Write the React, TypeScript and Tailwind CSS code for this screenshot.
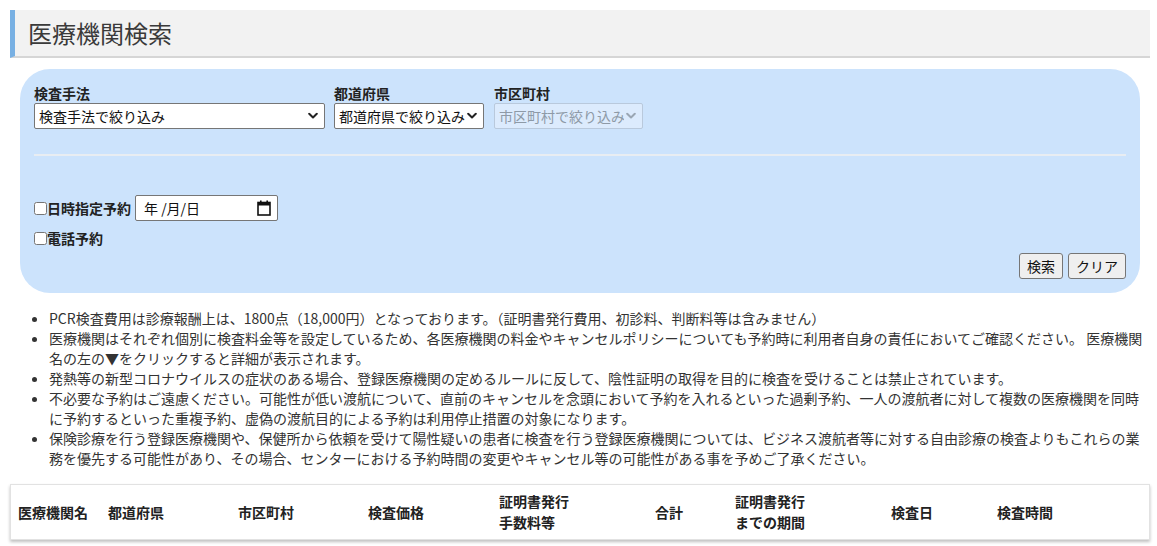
import React from "react";

const font = { fontFamily: '"Noto Sans CJK JP", "Noto Sans", sans-serif' };

function Chevron({ color = "#222" }: { color?: string }) {
  return (
    <svg width="10" height="7" viewBox="0 0 10 7" className="pointer-events-none absolute right-[7px] top-1/2 -translate-y-1/2">
      <path d="M1.2 1.2 L5 5 L8.8 1.2" fill="none" stroke={color} strokeWidth="2" strokeLinecap="round" strokeLinejoin="round" />
    </svg>
  );
}

function Sel({ width, text, disabled }: { width: string; text: string; disabled?: boolean }) {
  return (
    <div className={`relative ${width}`}>
      <select
        disabled={disabled}
        className={
          disabled
            ? "block h-[26px] w-full appearance-none rounded-[2px] border border-[#b9c9dc] bg-[#dcebfd] pl-[4px] pr-[18px] text-[14px] text-[#8e9aa7] outline-none"
            : "block h-[26px] w-full appearance-none rounded-[2px] border border-[#767676] bg-white pl-[4px] pr-[18px] text-[14px] text-[#111] outline-none"
        }
        style={font}
      >
        <option>{text}</option>
      </select>
      <Chevron color={disabled ? "#9aa6b3" : "#222"} />
    </div>
  );
}

function CalendarIcon() {
  return (
    <svg width="14" height="16" viewBox="0 0 14 16">
      <rect x="1" y="2.5" width="12" height="12.5" fill="none" stroke="#111" strokeWidth="1.6" />
      <rect x="1" y="2.5" width="12" height="3" fill="#111" />
      <rect x="3" y="0.5" width="1.6" height="3" fill="#111" />
      <rect x="9.4" y="0.5" width="1.6" height="3" fill="#111" />
    </svg>
  );
}

export default function App() {
  const headers: (string | [string, string])[] = [
    "医療機関名",
    "都道府県",
    "市区町村",
    "検査価格",
    ["証明書発行", "手数料等"],
    "合計",
    ["証明書発行", "までの期間"],
    "検査日",
    "検査時間",
  ];
  return (
    <div className="min-h-[546px] bg-white pl-[10px] pr-[7px] pt-[10px] text-[#333]" style={font}>
      <h1 className="flex h-[48px] items-center border-b-2 border-l-[5px] border-b-[#d6d6d6] border-l-[#78b0e3] bg-[#f2f2f2] pl-[13px] text-[24px] font-normal text-[#3a3a3a]">
        医療機関検索
      </h1>

      <div className="mx-[10px] mt-[11px] rounded-[30px] bg-[#cce3fc] px-[14px] pb-[14px] pt-[14px] text-[#222]">
        <div className="flex gap-[9px]">
          <div className="flex flex-col">
            <label className="h-[20px] text-[14px] font-bold leading-[20px]">検査手法</label>
            <Sel width="w-[291px]" text="検査手法で絞り込み" />
          </div>
          <div className="flex flex-col">
            <label className="h-[20px] text-[14px] font-bold leading-[20px]">都道府県</label>
            <Sel width="w-[150px]" text="都道府県で絞り込み" />
          </div>
          <div className="ml-[1px] flex flex-col">
            <label className="h-[20px] text-[14px] font-bold leading-[20px]">市区町村</label>
            <Sel width="w-[149px]" text="市区町村で絞り込み" disabled />
          </div>
        </div>

        <div className="mt-[25px] h-[2px] bg-[#e8edf2]" />

        <div className="mt-[39px] flex h-[26px] items-center">
          <input type="checkbox" className="m-0 h-[13px] w-[13px]" />
          <span className="text-[14px] font-bold leading-[20px]">日時指定予約</span>
          <div className="ml-[4px] flex h-[26px] w-[143px] items-center justify-between rounded-[2px] border border-[#767676] bg-white pl-[8px] pr-[6px] text-[14px] text-[#111]">
            <span>年 /月/日</span>
            <CalendarIcon />
          </div>
        </div>

        <div className="mt-[7px] flex h-[20px] items-center">
          <input type="checkbox" className="m-0 h-[13px] w-[13px]" />
          <span className="text-[14px] font-bold leading-[20px]">電話予約</span>
        </div>

        <div className="mt-[5px] flex justify-end gap-[5px]">
          <button className="h-[26px] rounded-[3px] border border-[#767676] bg-[#efefef] px-[7px] text-[14px] text-[#111]">
            検索
          </button>
          <button className="h-[26px] rounded-[3px] border border-[#767676] bg-[#efefef] px-[7px] text-[14px] text-[#111]">
            クリア
          </button>
        </div>
      </div>

      <ul className="mt-[15px] list-disc pl-[39px] text-[14px] leading-[20px] text-[#333]">
        <li>PCR検査費用は診療報酬上は、1800点（18,000円）となっております。（証明書発行費用、初診料、判断料等は含みません）</li>
        <li>
          医療機関はそれぞれ個別に検査料金等を設定しているため、各医療機関の料金やキャンセルポリシーについても予約時に利用者自身の責任においてご確認ください。
          医療機関名の左の▼をクリックすると詳細が表示されます。
        </li>
        <li>発熱等の新型コロナウイルスの症状のある場合、登録医療機関の定めるルールに反して、陰性証明の取得を目的に検査を受けることは禁止されています。</li>
        <li>不必要な予約はご遠慮ください。可能性が低い渡航について、直前のキャンセルを念頭において予約を入れるといった過剰予約、一人の渡航者に対して複数の医療機関を同時に予約するといった重複予約、虚偽の渡航目的による予約は利用停止措置の対象になります。</li>
        <li>保険診療を行う登録医療機関や、保健所から依頼を受けて陽性疑いの患者に検査を行う登録医療機関については、ビジネス渡航者等に対する自由診療の検査よりもこれらの業務を優先する可能性があり、その場合、センターにおける予約時間の変更やキャンセル等の可能性がある事を予めご了承ください。</li>
      </ul>

      <div className="mt-[16px] grid h-[56px] grid-cols-[90px_130px_130px_131px_156px_80px_156px_106px_1fr] items-center border border-[#e2e2e2] bg-white pl-[7px] text-[14px] font-bold leading-[21px] text-[#222] shadow-[0_2px_3px_rgba(0,0,0,0.25)]">
        {headers.map((h, i) =>
          Array.isArray(h) ? (
            <div key={i} className="flex flex-col">
              <span>{h[0]}</span>
              <span>{h[1]}</span>
            </div>
          ) : (
            <div key={i}>{h}</div>
          )
        )}
      </div>
    </div>
  );
}
